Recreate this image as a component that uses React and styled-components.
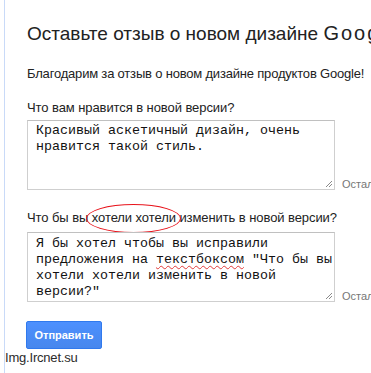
import React from 'react'
import styled, { createGlobalStyle } from 'styled-components'

const GlobalStyle = createGlobalStyle`
  html, body {
    margin: 0;
    padding: 0;
    background: #fff;
    overflow: hidden;
  }
  body {
    font-family: Arial, "Liberation Sans", sans-serif;
    color: #222;
  }
`

const Page = styled.div`
  position: relative;
  width: 371px;
  height: 373px;
  overflow: hidden;
  padding-left: 4px;
  box-sizing: border-box;
`

const Panel = styled.div`
  border-left: 1px solid #c9daf8;
  height: 100%;
  padding: 22px 0 0 22px;
  box-sizing: border-box;
`

const Title = styled.h1`
  margin: 0;
  font-size: 19px;
  line-height: 22px;
  font-weight: normal;
  white-space: nowrap;
  color: #222;
`

const Brand = styled.span`
  font-size: 20px;
  line-height: 22px;
  letter-spacing: 2px;
`

const Intro = styled.p`
  margin: 21px 0 0;
  font-size: 13px;
  line-height: 16px;
  letter-spacing: -0.19px;
  white-space: nowrap;
`

const Field = styled.div`
  margin-top: ${p => p.$top}px;
`

const Label = styled.div`
  font-size: 13px;
  line-height: 16px;
  letter-spacing: -0.08px;
  white-space: nowrap;
  margin-bottom: ${p => p.$gap}px;
`

const Marked = styled.span`
  position: relative;

  &::after {
    content: '';
    position: absolute;
    left: -6px;
    right: -2px;
    top: -6px;
    bottom: -8px;
    border: 1px solid #e8141c;
    border-radius: 50%;
  }
`

const Row = styled.div`
  display: flex;
  align-items: flex-end;
  white-space: nowrap;
`

const TextBox = styled.div`
  position: relative;
  flex: none;
  width: 308px;
  height: 70px;
  box-sizing: border-box;
  border: 1px solid #cfcfcf;
  border-top-color: #c0c0c0;
  padding: ${p => p.$pad}px 4px 0 8px;
  font-family: "Liberation Mono", "Courier New", monospace;
  font-size: 13.33px;
  line-height: 16px;
  color: #111;
  white-space: pre;
  overflow: hidden;
`

const Misspelled = styled.span`
  text-decoration: underline wavy #e23a3a;
  text-decoration-thickness: 1px;
  text-underline-offset: 2px;
`

const Grip = styled.svg`
  position: absolute;
  right: 1px;
  bottom: 1px;
`

const Counter = styled.span`
  margin-left: 7px;
  margin-bottom: -1px;
  font-size: 11px;
  line-height: 13px;
  color: #777;
`

const SendButton = styled.button`
  display: block;
  margin-top: 19px;
  width: 76px;
  height: 28px;
  border: 1px solid #3079ed;
  border-radius: 2px;
  background: linear-gradient(#4d90fe, #4787ed);
  color: #fff;
  font-family: Arial, "Liberation Sans", sans-serif;
  font-size: 11px;
  font-weight: bold;
  padding: 0;
  margin-left: -1px;
`

const Watermark = styled.div`
  position: absolute;
  left: 5px;
  top: 350px;
  font-family: Arial, "Liberation Sans", sans-serif;
  font-size: 13px;
  line-height: 16px;
  color: #2b2b2b;
  letter-spacing: -0.2px;
  text-shadow: 0 0 1px #fff;
`

const ResizeGrip = () => (
  <Grip width="9" height="9" viewBox="0 0 9 9">
    <path d="M8 2 L2 8 M8 5 L5 8" stroke="#8a8a8a" strokeWidth="1" />
  </Grip>
)

const App = () => {
  return (
    <>
      <GlobalStyle />
      <Page>
        <Panel>
          <Title>Оставьте отзыв о новом дизайне <Brand>Google</Brand></Title>
          <Intro>Благодарим за отзыв о новом дизайне продуктов Google!</Intro>

          <Field $top={18}>
            <Label $gap={4}>Что вам нравится в новой версии?</Label>
            <Row>
              <TextBox $pad={2}>
                {'Красивый аскетичный дизайн, очень\nнравится такой стиль.'}
                <ResizeGrip />
              </TextBox>
              <Counter>Осталось символов: 446</Counter>
            </Row>
          </Field>

          <Field $top={20}>
            <Label $gap={6}>
              Что бы вы <Marked>хотели хотели </Marked>изменить в новой версии?
            </Label>
            <Row>
              <TextBox $pad={3}>
                {'Я бы хотел чтобы вы исправили\nпредложения на '}
                <Misspelled>текстбоксом</Misspelled>
                {' "Что бы вы\nхотели хотели изменить в новой\nверсии?"'}
                <ResizeGrip />
              </TextBox>
              <Counter>Осталось символов: 391</Counter>
            </Row>
          </Field>

          <SendButton>Отправить</SendButton>
        </Panel>
        <Watermark>Img.Ircnet.su</Watermark>
      </Page>
    </>
  )
}

export default App
